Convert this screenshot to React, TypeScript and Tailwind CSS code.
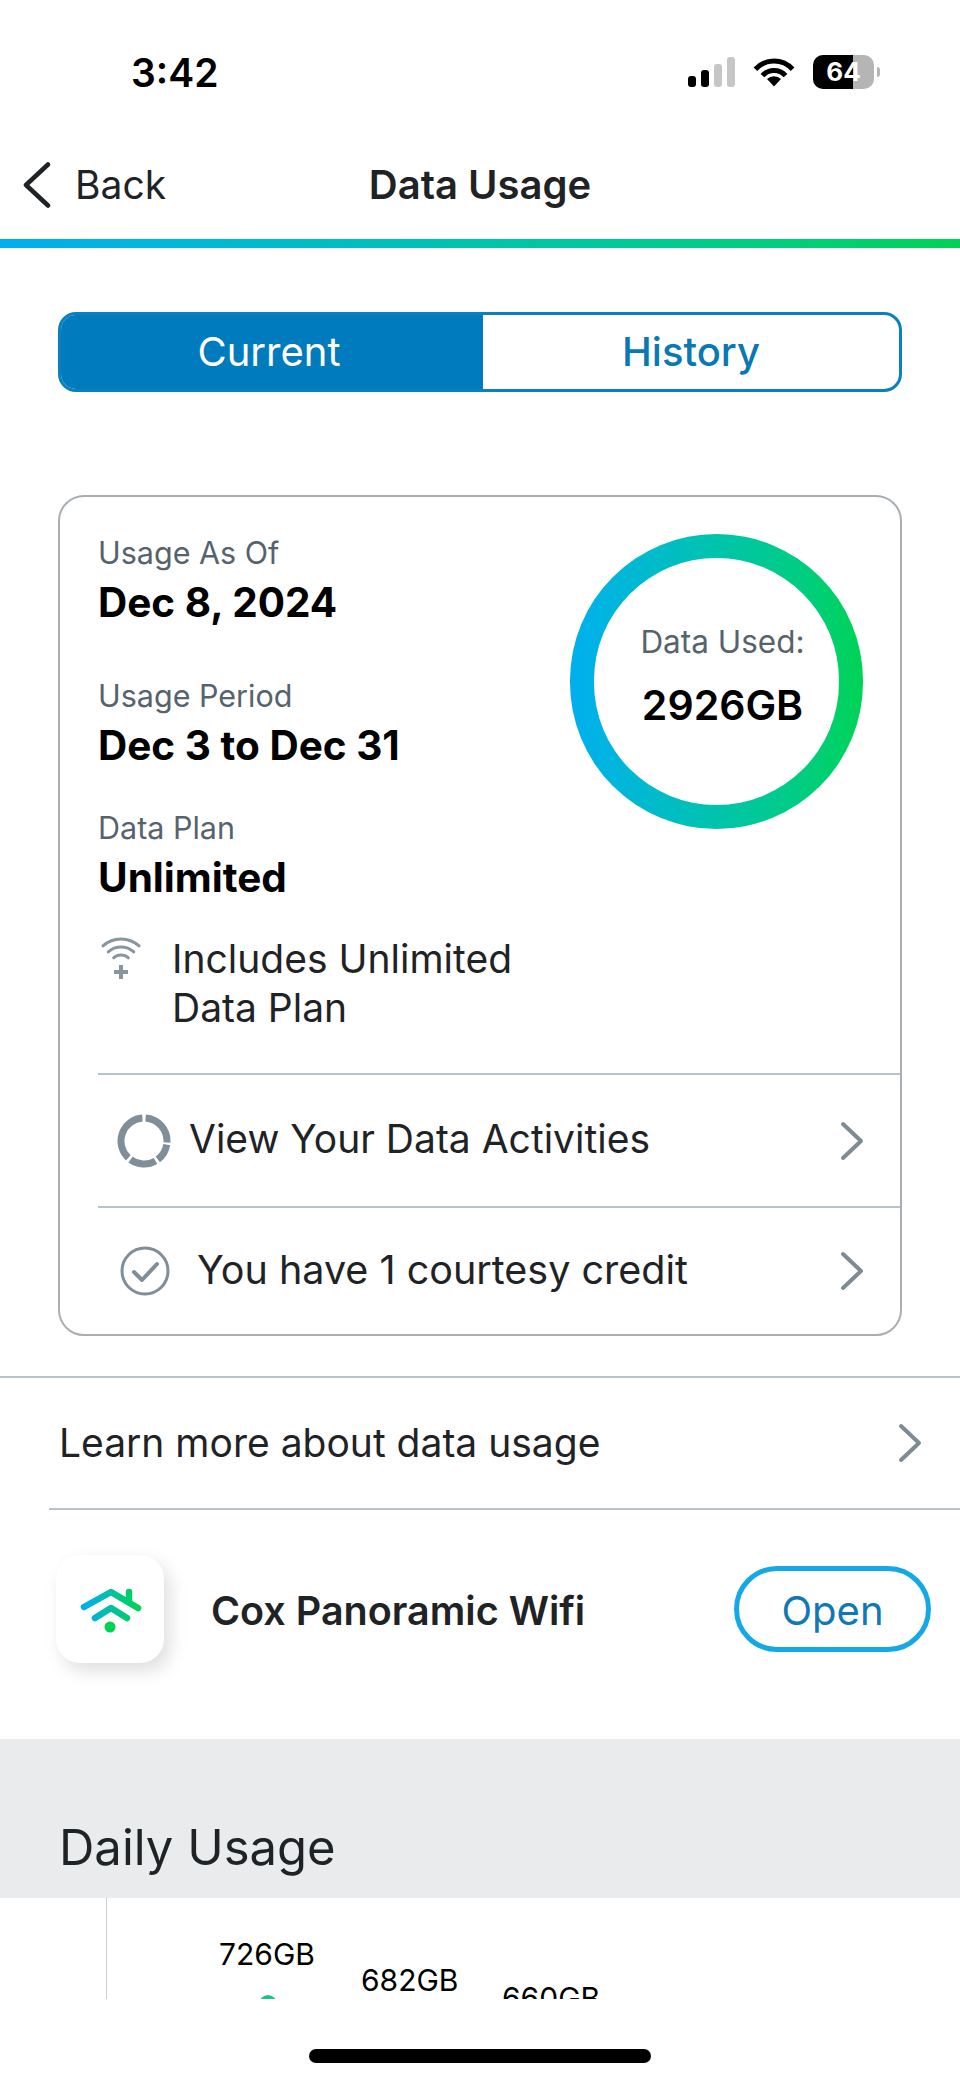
// builds an svg arc between two angles, 0 is twelve o'clock, clockwise
function arc(cx: number, cy: number, r: number, a0: number, a1: number) {
    const pt = (a: number) => {
        const rad = ((a - 90) * Math.PI) / 180;
        return `${(cx + r * Math.cos(rad)).toFixed(2)} ${(cy + r * Math.sin(rad)).toFixed(2)}`;
    };
    const large = a1 - a0 > 180 ? 1 : 0;
    return `M${pt(a0)} A${r} ${r} 0 ${large} 1 ${pt(a1)}`;
}

function StatusBar() {
    return (
        <div className="h-[144px] flex items-center justify-between pl-[131px] pr-[80px]">
            <span className="text-[39px] leading-none font-semibold text-black">3:42</span>
            <div className="flex items-center">
                <svg width="48" height="30" viewBox="0 0 48 30" className="mt-[-1px]">
                    <rect x="0" y="19" width="8" height="11" rx="3" fill="#000" />
                    <rect x="13" y="13" width="8" height="17" rx="3" fill="#000" />
                    <rect x="26" y="7" width="8" height="23" rx="3" fill="#c6c6c6" />
                    <rect x="39" y="0" width="8" height="30" rx="3" fill="#c6c6c6" />
                </svg>
                <svg width="42" height="30" viewBox="0 0 42 30" className="ml-[17px] mt-[-1px]">
                    <g fill="none" stroke="#000" strokeWidth="5">
                        <path d={arc(21, 29, 25, -48, 48)} />
                        <path d={arc(21, 29, 15.5, -48, 48)} />
                    </g>
                    <path d="M21 29.5 L14 22 A10 10 0 0 1 28 22 Z" fill="#000" />
                </svg>
                <div className="relative ml-[18px] w-[61px] h-[34px] rounded-[10px] overflow-hidden bg-[#b5b5b5]">
                    <div className="w-[40px] h-full bg-black" />
                    <span className="absolute inset-0 flex items-center justify-center text-white font-bold text-[26px] leading-none">64</span>
                </div>
                <div className="ml-[3px] w-[3px] h-[10px] rounded-r-full bg-[#b5b5b5]" />
            </div>
        </div>
    );
}

function Chevron() {
    return (
        <svg width="24" height="40" viewBox="0 0 24 40" className="shrink-0">
            <path d="M3 3 L21 20 L3 37" fill="none" stroke="#7d8b95" strokeWidth="4" strokeLinecap="round" strokeLinejoin="round" />
        </svg>
    );
}

function WifiPlus() {
    return (
        <svg width="46" height="46" viewBox="0 0 46 46" className="shrink-0">
            <g fill="none" stroke="#8a969f" strokeWidth="3" strokeLinecap="round">
                <path d={arc(23, 32, 27, -42, 42)} />
                <path d={arc(23, 32, 19, -42, 42)} />
                <path d={arc(23, 32, 11, -42, 42)} />
                <path d="M23 31 V45 M16 38 H30" strokeWidth="4" strokeLinecap="butt" />
            </g>
        </svg>
    );
}

function ActivityRing() {
    return (
        <svg width="54" height="54" viewBox="0 0 54 54" className="shrink-0">
            <g fill="none" stroke="#7f8e99" strokeWidth="7">
                <path d={arc(27, 27, 23, 4, 94)} />
                <path d={arc(27, 27, 23, 99, 143)} />
                <path d={arc(27, 27, 23, 150, 216)} />
                <path d={arc(27, 27, 23, 223, 356)} />
            </g>
        </svg>
    );
}

function CheckCircle() {
    return (
        <svg width="50" height="50" viewBox="0 0 50 50" className="shrink-0">
            <circle cx="25" cy="25" r="23" fill="none" stroke="#7f8e99" strokeWidth="3" />
            <path d="M14 26 L22 34 L37 18" fill="none" stroke="#7f8e99" strokeWidth="4" strokeLinecap="round" strokeLinejoin="round" />
        </svg>
    );
}

function PanoramicLogo() {
    return (
        <svg width="108" height="108" viewBox="0 0 108 108">
            <defs>
                <linearGradient id="roof" gradientUnits="userSpaceOnUse" x1="28" y1="0" x2="82" y2="0">
                    <stop offset="0" stopColor="#00aeef" />
                    <stop offset="1" stopColor="#00d354" />
                </linearGradient>
            </defs>
            <g fill="none" stroke="url(#roof)" strokeWidth="6.5" strokeLinecap="round" strokeLinejoin="round">
                <path d="M28 52 L55 37 L82 53" />
                <path d="M73 37 V47" />
                <path d="M39 63 L55 53 L71 63" />
            </g>
            <circle cx="54" cy="72" r="5.5" fill="#00d354" />
        </svg>
    );
}

function Field({ label, value, gap }: { label: string; value: string; gap: string }) {
    return (
        <div className={gap}>
            <div className="text-[30.5px] leading-[36px] pt-[1px] text-[#56636d]">{label}</div>
            <div className="mt-[10px] text-[40.5px] leading-[44px] font-bold text-black">{value}</div>
        </div>
    );
}

export default function App() {
    return (
        <div className="w-[960px] h-[2082px] overflow-hidden bg-white font-['Inter',sans-serif] text-[#1f2326]">
            <StatusBar />

            {/* Nav */}
            <div className="h-[82px] relative flex items-center justify-center">
                <div className="absolute left-[23px] top-0 h-full flex items-center">
                    <svg width="28" height="46" viewBox="0 0 28 46">
                        <path d="M25 2.5 L3 23 L25 43.5" fill="none" stroke="#1f2326" strokeWidth="4.5" strokeLinecap="round" strokeLinejoin="round" />
                    </svg>
                    <span className="ml-[24px] text-[39px]">Back</span>
                </div>
                <span className="text-[40px] font-semibold">Data Usage</span>
            </div>
            <div className="mt-[13px] h-[9px] bg-linear-to-r from-[#00aeef] to-[#00d354]" />

            {/* Tabs */}
            <div className="mt-[64px] mx-[58px] h-[80px] flex rounded-[18px] border-[3px] border-[#0a80c0] overflow-hidden text-[40px]">
                <div className="w-[422px] flex items-center justify-center pr-[6px] bg-[#007bbd] text-white">Current</div>
                <div className="flex-1 flex items-center justify-center text-[#0a78b5] font-medium">History</div>
            </div>

            {/* Usage card */}
            <div className="mt-[103px] mx-[58px] h-[841px] rounded-[26px] border-2 border-[#a8aeb3]">
                <div className="h-[576px] flex justify-between pt-[37px] pl-[38px] pr-[37px]">
                    <div>
                        <Field label="Usage As Of" value="Dec 8, 2024" gap="" />
                        <Field label="Usage Period" value="Dec 3 to Dec 31" gap="mt-[52px]" />
                        <Field label="Data Plan" value="Unlimited" gap="mt-[41px]" />
                        <div className="mt-[34px] flex">
                            <WifiPlus />
                            <div className="ml-[28px] text-[39px] leading-[49px]">
                                Includes Unlimited
                                <br />
                                Data Plan
                            </div>
                        </div>
                    </div>
                    <div className="w-[293px] h-[295px] rounded-full p-[24px] bg-linear-to-r from-[#00aeef] to-[#00d354]">
                        <div className="h-full rounded-full bg-white flex flex-col items-center pt-[66px] pl-[12px]">
                            <div className="text-[31.5px] leading-[36px] text-[#56636d]">Data Used:</div>
                            <div className="mt-[23px] text-[41px] leading-[44px] font-semibold text-black">2926GB</div>
                        </div>
                    </div>
                </div>
                <div className="ml-[38px] h-[133px] border-t-2 border-[#b7c3cb] flex items-center justify-between pl-[19px] pr-[36px]">
                    <div className="flex items-center">
                        <ActivityRing />
                        <span className="ml-[18px] mt-[-2px] text-[39px]">View Your Data Activities</span>
                    </div>
                    <Chevron />
                </div>
                <div className="ml-[38px] h-[128px] border-t-2 border-[#b7c3cb] flex items-center justify-between pl-[22px] pr-[36px]">
                    <div className="flex items-center">
                        <CheckCircle />
                        <span className="ml-[27px] text-[39.5px]">You have 1 courtesy credit</span>
                    </div>
                    <Chevron />
                </div>
            </div>

            {/* Learn more */}
            <div className="mt-[40px] h-[132px] border-t-2 border-[#b7c3cb] flex items-center justify-between pl-[59px] pr-[38px]">
                <span className="text-[39px]">Learn more about data usage</span>
                <Chevron />
            </div>

            {/* Panoramic app row */}
            <div className="ml-[49px] h-[231px] border-t-2 border-[#b7c3cb] flex items-start justify-between pr-[29px]">
                <div className="flex items-center mt-[45px] ml-[7px]">
                    <div className="w-[108px] h-[108px] rounded-[24px] bg-white shadow-[6px_8px_18px_rgba(0,0,0,0.13)]">
                        <PanoramicLogo />
                    </div>
                    <span className="ml-[47px] text-[39.5px] font-semibold mt-[5px]">Cox Panoramic Wifi</span>
                </div>
                <div className="mt-[56px] w-[197px] h-[86px] pt-[3px] rounded-[43px] border-[5px] border-[#14a9e6] flex items-center justify-center text-[40px] text-[#0f78b5]">
                    Open
                </div>
            </div>

            {/* Daily usage */}
            <div className="h-[159px] bg-[#e9ebed] flex items-end pl-[59px] pb-[22px]">
                <span className="text-[49px] leading-[56px]">Daily Usage</span>
            </div>
            <div className="relative h-[101px] overflow-hidden">
                <div className="absolute left-[106px] top-0 bottom-0 w-px bg-[#c9d0d5]" />
                <span className="absolute left-[219px] top-[41px] text-[30px] leading-[30px] text-black">726GB</span>
                <span className="absolute left-[361px] top-[67px] text-[30px] leading-[30px] text-black">682GB</span>
                <span className="absolute left-[502px] top-[85px] text-[30px] leading-[30px] text-black">660GB</span>
                <div className="absolute left-[259px] top-[97px] w-[18px] h-[18px] rounded-full bg-[#1fc28a]" />
            </div>

            {/* Home indicator */}
            <div className="mt-[50px] mx-auto w-[342px] h-[14px] rounded-full bg-black" />
        </div>
    );
}
